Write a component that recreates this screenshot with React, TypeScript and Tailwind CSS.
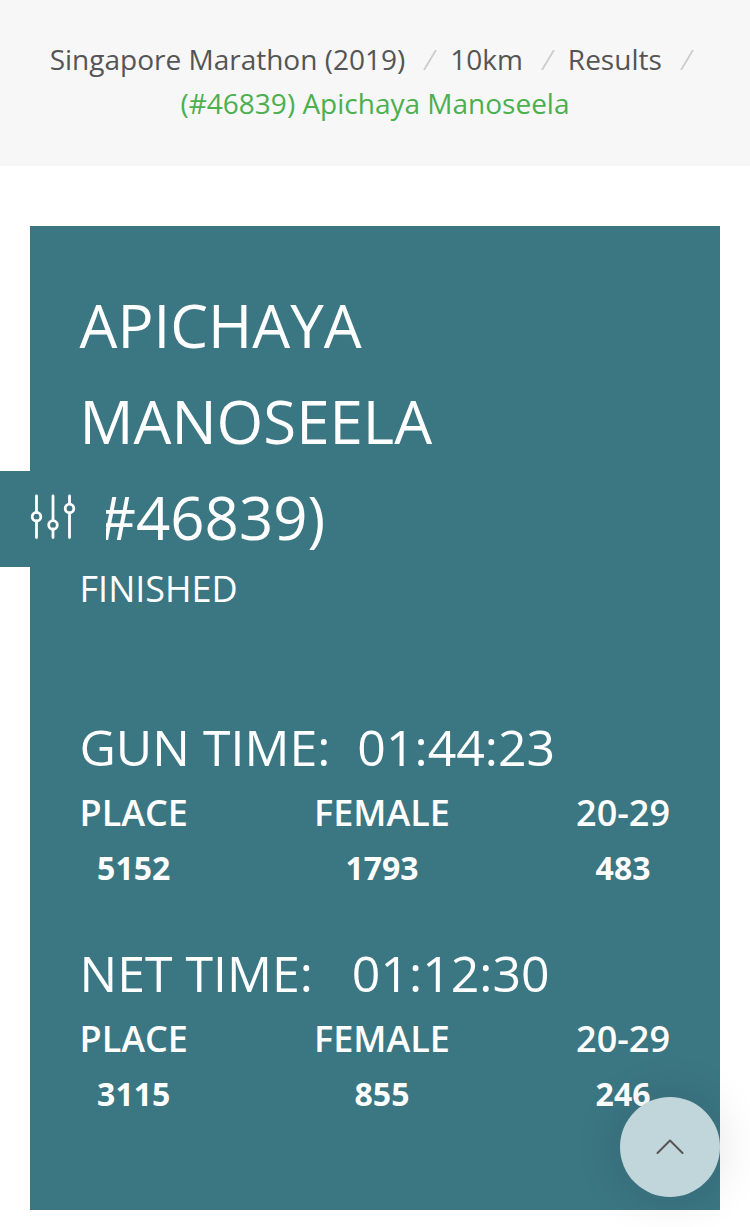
const crumbs = ["Singapore Marathon (2019)", "10km", "Results"];

const results = [
  {
    label: "GUN TIME:",
    time: "01:44:23",
    gap: "ml-[27px]",
    margin: "mt-[94px]",
    places: [
      { title: "PLACE", value: "5152" },
      { title: "FEMALE", value: "1793" },
      { title: "20-29", value: "483" },
    ],
  },
  {
    label: "NET TIME:",
    time: "01:12:30",
    gap: "ml-[39px]",
    margin: "mt-[35px]",
    places: [
      { title: "PLACE", value: "3115" },
      { title: "FEMALE", value: "855" },
      { title: "20-29", value: "246" },
    ],
  },
];

const Breadcrumbs = () => (
  <nav className="h-[166px] bg-[#f7f7f7] pt-[37px] text-center text-[28px] leading-[44px] text-[#555]">
    <div className="flex pl-[49.7px] whitespace-nowrap">
      {crumbs.map((crumb) => (
        <span key={crumb} className="flex">
          {crumb}
          <svg className="mt-[13px] mr-[13px] ml-[18px] h-[20px] w-[14px]" viewBox="0 0 14 20" fill="none" stroke="#ccc" strokeWidth="1.8">
            <path d="M13 0L1 20" />
          </svg>
        </span>
      ))}
    </div>
    <div className="text-[#4caf50]">(#46839) Apichaya Manoseela</div>
  </nav>
);

const App = () => {
  return (
    <div className="relative h-[1227px] overflow-hidden bg-white font-['Open_Sans',sans-serif]">
      <Breadcrumbs />

      <main className="mx-[30px] mt-[60px] h-[984px] bg-[#3b7683] pt-[51px] pr-[50px] pl-[49.5px] text-white">
        <h1 className="text-[60px] leading-[96px]">
          APICHAYA
          <br />
          MANOSEELA
          <br />
          (#46839)
        </h1>
        <p className="text-[36px] leading-[48px]">FINISHED</p>

        {results.map(({ label, time, gap, margin, places }) => (
          <section key={label} className={margin}>
            <h2 className="mb-px flex text-[50px] leading-[80px] whitespace-nowrap">
              {label}
              <span className={gap}>{time}</span>
            </h2>
            <div className="flex justify-between text-center">
              {places.map(({ title, value }) => (
                <div key={title}>
                  <div className="text-[36px] leading-[50px] font-semibold">{title}</div>
                  <div className="text-[32px] leading-[60px] font-bold">{value}</div>
                </div>
              ))}
            </div>
          </section>
        ))}
      </main>

      {/* Filter toggle */}
      <button className="absolute top-[471px] left-0 h-[96px] w-[106px] bg-[#3b7683]">
        <svg className="absolute top-[22px] left-[30px]" width="46" height="48" viewBox="0 0 46 48" fill="none" stroke="#fff" strokeWidth="2.8" strokeLinecap="round">
          <path d="M6.5 3V19M6.5 28V44.500M23 3V27M23 36V44.500M39.500 3V10.500M39.500 20V44.500" />
          <circle cx="6.500" cy="23.700" r="4.300" />
          <circle cx="23" cy="32" r="4.300" />
          <circle cx="39.500" cy="15.500" r="4.300" />
        </svg>
      </button>

      {/* Back to top */}
      <button className="absolute top-[1097px] left-[620px] flex size-[100px] items-center justify-center rounded-full bg-[#c0d6da] shadow-[0_0_50px_rgba(0,0,0,0.12)]">
        <svg width="28" height="16" viewBox="0 0 28 16" fill="none" stroke="#555" strokeWidth="2" strokeLinecap="round" strokeLinejoin="round">
          <path d="M1.500 14L14 1.500L26.500 14" />
        </svg>
      </button>
    </div>
  );
};

export default App;
